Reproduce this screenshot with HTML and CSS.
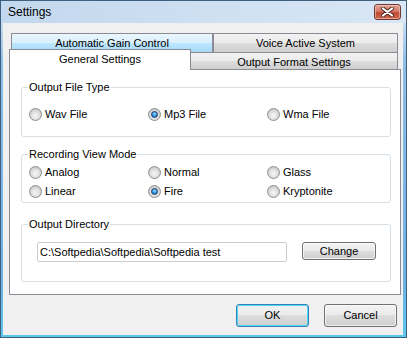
FILE: index.html
```html
<!DOCTYPE html>
<html>
<head>
    <title>Settings</title>
    <link rel="stylesheet" href="styles.css">
</head>
<body>
    <div class="window">
        <div class="titlebar">
            <span class="title">Settings</span>
            <div class="close-btn">
                <svg width="15" height="10" viewBox="0 0 15 10">
                    <path d="M3 1.5 L12 8.5 M12 1.5 L3 8.5" stroke="#4a2a28" stroke-width="4" stroke-linecap="round"/>
                    <path d="M3 1.5 L12 8.5 M12 1.5 L3 8.5" stroke="#ffffff" stroke-width="2.2" stroke-linecap="round"/>
                </svg>
            </div>
        </div>

        <div class="client">
            <div class="tabs">
                <div class="tab-row back">
                    <div class="tab hot tab-agc">Automatic Gain Control</div>
                    <div class="tab tab-vas">Voice Active System</div>
                </div>
                <div class="tab-row front">
                    <div class="tab selected tab-general">General Settings</div>
                    <div class="tab tab-output">Output Format Settings</div>
                </div>

                <div class="tab-page">
                    <div class="group group-type">
                        <div class="group-title">Output File Type</div>
                        <div class="radio-grid first">
                            <label class="radio-item"><span class="radio"></span>Wav File</label>
                            <label class="radio-item"><span class="radio checked"></span>Mp3 File</label>
                            <label class="radio-item"><span class="radio"></span>Wma File</label>
                        </div>
                    </div>

                    <div class="group group-view">
                        <div class="group-title">Recording View Mode</div>
                        <div class="radio-grid">
                            <label class="radio-item"><span class="radio"></span>Analog</label>
                            <label class="radio-item"><span class="radio"></span>Normal</label>
                            <label class="radio-item"><span class="radio"></span>Glass</label>
                            <label class="radio-item"><span class="radio"></span>Linear</label>
                            <label class="radio-item"><span class="radio checked"></span>Fire</label>
                            <label class="radio-item"><span class="radio"></span>Kryptonite</label>
                        </div>
                    </div>

                    <div class="group group-dir">
                        <div class="group-title">Output Directory</div>
                        <div class="dir-row">
                            <div class="textbox">C:\Softpedia\Softpedia\Softpedia test</div>
                            <div class="button change">Change</div>
                        </div>
                    </div>
                </div>
            </div>

            <div class="dialog-buttons">
                <div class="button default">OK</div>
                <div class="button">Cancel</div>
            </div>
        </div>
    </div>
</body>
</html>
```

FILE: styles.css
```css
body {
    margin: 0;
    font-family: "Liberation Sans", Arial, sans-serif;
    font-size: 11px;
    color: #000;
    background: #fff;
}
.window {
    width: 407px;
    height: 338px;
    box-sizing: border-box;
    border: 1px solid #3f5f7f;
    padding: 0 3px 3px 2px;
    background: linear-gradient(#c6dbef 0px, #c9dcf0 22px, #8fbee6 60px, #6eb0e2 280px, #5cc8ea 338px);
}
.titlebar {
    height: 22px;
    display: flex;
    align-items: center;
    justify-content: space-between;
    background: linear-gradient(to right, #c2d8ee, #d9e7f5);
    margin: 0 -3px 0 -2px;
    padding: 0 5px 0 7px;
}
.title {
    font-size: 12px;
    color: #000;
    margin-top: -1px;
}
.close-btn {
    width: 25px;
    height: 14px;
    border: 1px solid #6d3a35;
    border-radius: 3px;
    background: linear-gradient(#e3a394 0%, #d37865 45%, #c04a33 55%, #cf6a4d 100%);
    display: flex;
    align-items: center;
    justify-content: center;
    box-shadow: inset 0 0 0 1px rgba(255, 220, 210, 0.5);
}
.client {
    background: #f0f0f0;
    height: 312px;
    padding-top: 10px;
    box-sizing: border-box;
}
.tabs {
    margin-left: 6px;
    width: 392px;
}
.tab-row {
    display: flex;
    align-items: flex-end;
}
.tab-row.back {
    margin-left: 2px;
    height: 19px;
    align-items: flex-start;
}
.tab-row.front {
    margin-top: -3px;
    height: 20px;
}
.tab {
    box-sizing: border-box;
    border: 1px solid #898c95;
    border-bottom: none;
    background: linear-gradient(#f2f2f2 0%, #ebebeb 50%, #dddddd 50%, #cfcfcf 100%);
    text-align: center;
    line-height: 18px;
}
.tab.hot {
    background: linear-gradient(#eaf6fd 0%, #d9f0fc 50%, #bee6fd 50%, #a7d9f5 100%);
}
.tab-agc {
    width: 202px;
    height: 19px;
}
.tab-vas {
    width: 185px;
    height: 19px;
}
.tab-general {
    width: 182px;
    height: 21px;
    margin-bottom: -1px;
    background: #fff;
    position: relative;
    z-index: 1;
    line-height: 19px;
}
.tab-output {
    width: 208px;
    height: 17px;
    margin-left: -1px;
    line-height: 18px;
}
.tab-page {
    box-sizing: border-box;
    width: 392px;
    height: 226px;
    border: 1px solid #898c95;
    background: #fff;
    padding: 17px 0 0 11px;
}
.group {
    box-sizing: border-box;
    width: 370px;
    border: 1px solid #d5dfe5;
    border-radius: 3px;
}
.group-type {
    height: 50px;
}
.group-view {
    height: 49px;
    margin-top: 17px;
}
.group-dir {
    height: 58px;
    margin-top: 21px;
}
.group-title {
    width: fit-content;
    margin: -7px 0 0 6px;
    padding: 0 1px;
    background: #fff;
    line-height: 13px;
}
.radio-grid {
    display: grid;
    grid-template-columns: 119px 119px 119px;
    row-gap: 3px;
    padding-left: 7px;
    margin-top: 3px;
}
.radio-grid.first {
    margin-top: 12px;
}
.radio-item {
    display: flex;
    align-items: center;
    gap: 3px;
    height: 16px;
}
.radio {
    box-sizing: border-box;
    width: 13px;
    height: 13px;
    border-radius: 50%;
    border: 1px solid #8f8f8f;
    background: radial-gradient(circle at 50% 60%, #f6f6f6 0, #e6e6e6 35%, #c9c9c9 75%, #dcdcdc 100%);
    position: relative;
}
.radio.checked::after {
    content: "";
    position: absolute;
    left: 2px;
    top: 2px;
    width: 7px;
    height: 7px;
    box-sizing: border-box;
    border-radius: 50%;
    border: 1px solid #1b3f6c;
    background: radial-gradient(circle at 50% 35%, #9fe0ff 0, #3b9de6 45%, #0f5cb0 100%);
}
.dir-row {
    display: flex;
    align-items: flex-start;
    margin-top: 11px;
    padding-left: 15px;
}
.textbox {
    box-sizing: border-box;
    width: 250px;
    height: 20px;
    border: 1px solid #c9cdd3;
    border-radius: 2px;
    padding-left: 2px;
    line-height: 18px;
    background: #fff;
}
.button {
    box-sizing: border-box;
    width: 73px;
    height: 23px;
    border: 1px solid #707070;
    border-radius: 3px;
    background: linear-gradient(#f2f2f2 0%, #ebebeb 50%, #dddddd 50%, #cfcfcf 100%);
    box-shadow: inset 0 0 0 1px rgba(255, 255, 255, 0.7);
    text-align: center;
    line-height: 21px;
}
.button.change {
    width: 74px;
    height: 18px;
    margin-left: 15px;
    line-height: 16px;
}
.button.default {
    border-color: #3c7fb1;
    box-shadow: inset 0 0 0 1px #48d7fb;
}
.dialog-buttons {
    display: flex;
    justify-content: flex-end;
    gap: 15px;
    margin-top: 9px;
    padding-right: 6px;
}
```
